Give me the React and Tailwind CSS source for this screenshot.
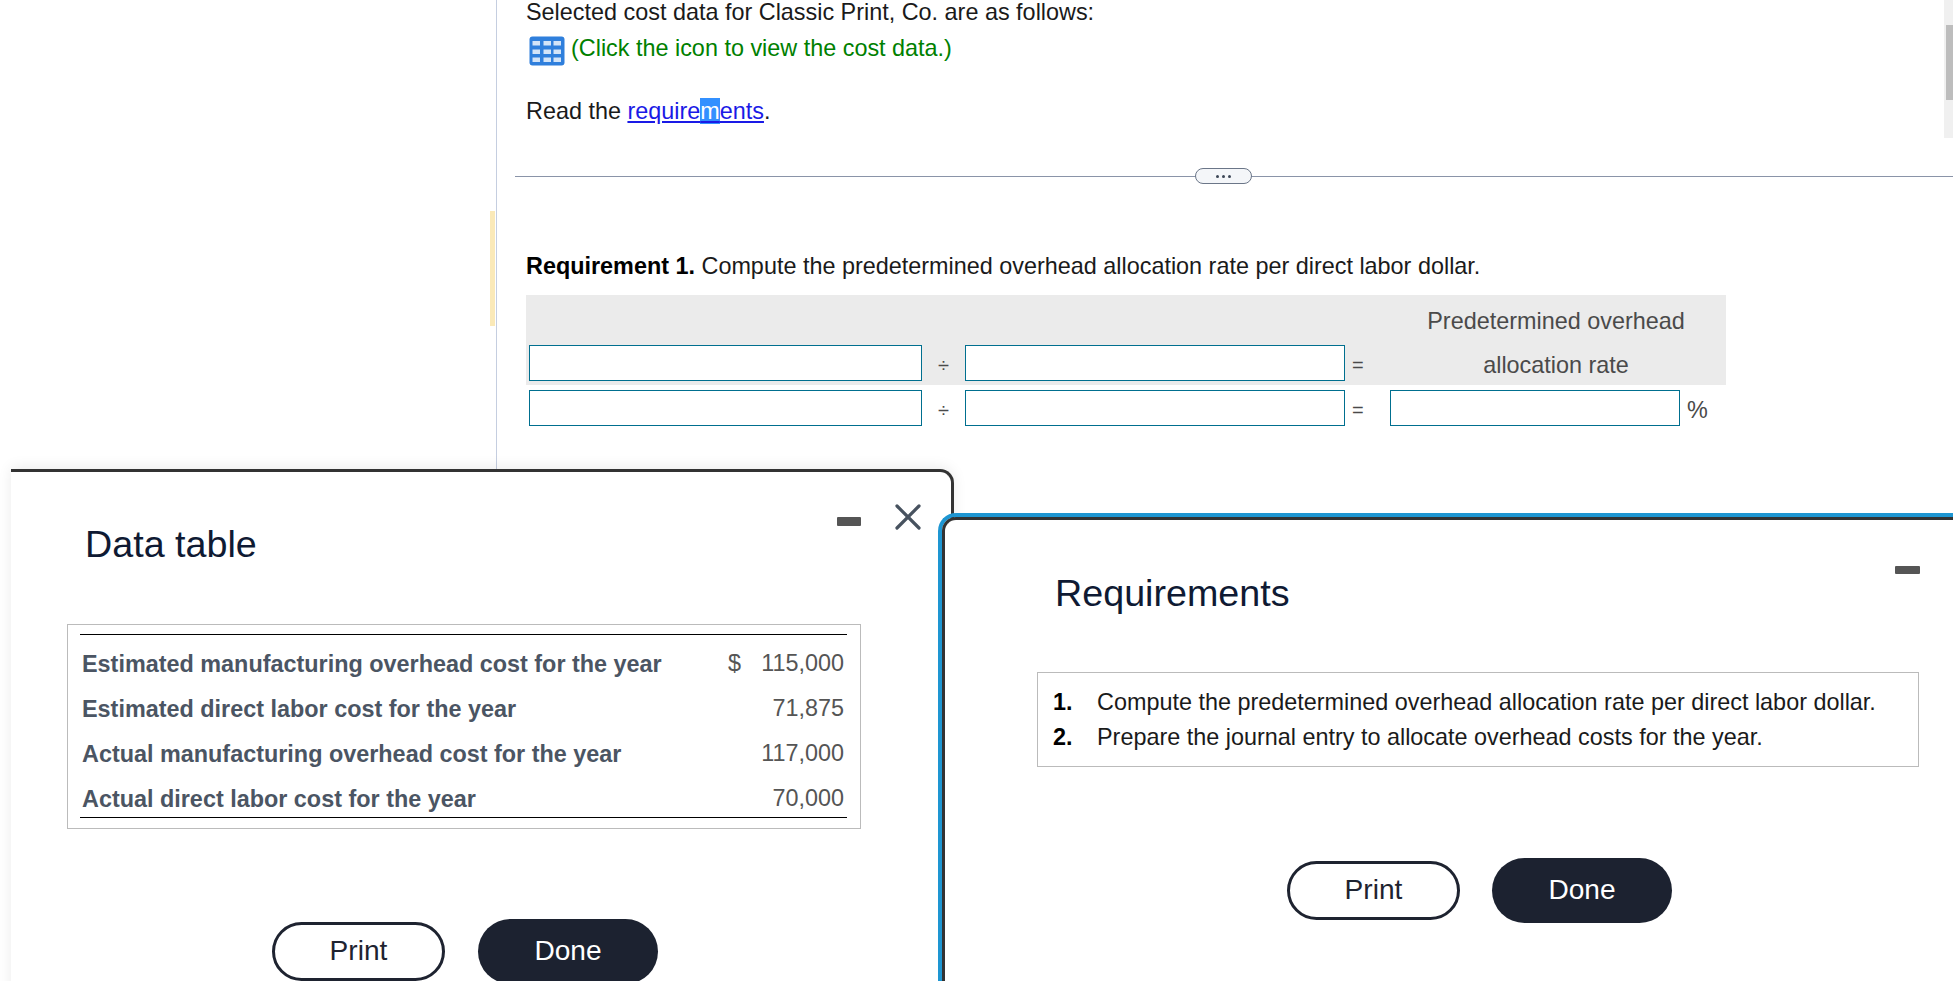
const FONT = "font-['Liberation_Sans',Arial,sans-serif]";

const dataRows = [
  ['Estimated manufacturing overhead cost for the year', '115,000', true],
  ['Estimated direct labor cost for the year', '71,875'],
  ['Actual manufacturing overhead cost for the year', '117,000'],
  ['Actual direct labor cost for the year', '70,000'],
];

function TableIcon() {
  return (
    <svg width="36" height="30" viewBox="0 0 36 30" className="shrink-0">
      <rect x="0.5" y="0.5" width="35" height="29" rx="3" fill="#2f7fdc" />
      {[5, 13.5, 21.5].map((y) =>
        [3.5, 14.5, 24.5].map((x) => <rect key={`${x}-${y}`} x={x} y={y} width="7.5" height="4.5" fill="#d3e4f8" />)
      )}
    </svg>
  );
}

function AnswerBox({ className }) {
  return <div className={`h-[36px] shrink-0 border border-[#006f8f] bg-white ${className}`} />;
}

function FormulaRow({ last }) {
  return (
    <div className="flex h-[36px] items-center pl-[3px] text-[#4a4a4a]">
      <AnswerBox className="w-[393px]" />
      <div className="w-[43px] pt-[3px] text-center text-[20px]">÷</div>
      <AnswerBox className="w-[380px]" />
      <div className="w-[41px] pl-[7px] pt-[3px] text-[20px]">=</div>
      {last}
    </div>
  );
}

function Minimize({ className }) {
  return <div className={`absolute bg-[#555] rounded-[1px] ${className}`} />;
}

function Buttons({ className, gap }) {
  return (
    <div className={`flex items-center text-[28.1px] ${gap} ${className}`}>
      <button type="button" className="h-[59px] w-[173px] rounded-[30px] border-[3px] border-[#1e2330] bg-white text-[#1e2330]">
        Print
      </button>
      <button type="button" className="h-[65px] w-[180px] rounded-[33px] bg-[#1c2230] text-white">
        Done
      </button>
    </div>
  );
}

export default function App() {
  return (
    <div className={`relative h-[981px] w-[1953px] overflow-hidden bg-white ${FONT} text-[23.4px] text-[#1a1a1a]`}>
      <div className="flex h-[470px]">
        <div className="relative w-[497px] shrink-0 border-r border-[#c5cee0]">
          <div className="absolute left-[490px] top-[211px] h-[115px] w-[5px] bg-[#fae9b8]" />
        </div>
        <div className="grow pl-[18px]">
          <div className="pl-[11px]">
            <div className="h-[24px] leading-[24px]">Selected cost data for Classic Print, Co. are as follows:</div>
            <div className="mt-[12px] flex h-[30px] items-center gap-[6px] pl-[3px] text-[#008000]">
              <TableIcon />
              <span className="mb-[4px]">(Click the icon to view the cost data.)</span>
            </div>
            <div className="mt-[30px] h-[30px] leading-[30px]">
              Read the{' '}
              <a href="#req" className="text-[#1a1ae6] underline">
                require<span className="bg-[#3390ff] text-white">m</span>ents
              </a>
              .
            </div>
          </div>
          <div className="relative mt-[50px] h-px bg-[#8a94a8]">
            <div className="absolute left-[680px] top-[-8px] flex h-[16px] w-[57px] items-center justify-center gap-[3px] rounded-[8px] border border-[#6b7688] bg-[#f4f6f9] pt-[1px]">
              <span className="h-[3px] w-[3px] rounded-full bg-[#3c4656]" />
              <span className="h-[3px] w-[3px] rounded-full bg-[#3c4656]" />
              <span className="h-[3px] w-[3px] rounded-full bg-[#3c4656]" />
            </div>
          </div>
          <div className="pl-[11px]">
            <div className="mt-[76px] h-[26px] leading-[26px]">
              <b className="text-black">Requirement 1.</b> Compute the predetermined overhead allocation rate per direct labor dollar.
            </div>
            <div className="mt-[16px] h-[90px] w-[1200px] bg-[#ebebeb]">
              <div className="flex h-[50px] justify-end">
                <div className="w-[340px] pt-[11px] text-center leading-[30px] text-[#4a4a4a]">Predetermined overhead</div>
              </div>
              <FormulaRow last={<div className="w-[340px] pt-[6px] text-center text-[#4a4a4a]">allocation rate</div>} />
            </div>
            <div className="mt-[5px]">
              <FormulaRow
                last={
                  <>
                    <AnswerBox className="ml-[4px] w-[290px]" />
                    <span className="ml-[7px] pt-[5px] text-[#4a4a4a]">%</span>
                  </>
                }
              />
            </div>
          </div>
        </div>
      </div>

      {/* data table window */}
      <div className="absolute left-[11px] top-[469px] h-[560px] w-[943px] rounded-tr-[14px] border-r-[3px] border-t-[3px] border-[#333] bg-white shadow-[0_-2px_14px_rgba(0,0,0,0.08)]">
        <Minimize className="left-[826px] top-[45px] h-[9px] w-[24px]" />
        <svg width="26" height="26" viewBox="0 0 26 26" className="absolute left-[884px] top-[32px]">
          <path d="M2 2 L24 24 M24 2 L2 24" stroke="#47525f" strokeWidth="3.2" strokeLinecap="round" />
        </svg>
        <h2 className="pl-[74px] pt-[49px] text-[37.7px] leading-[46px] text-[#0f1a33]">Data table</h2>
        <div className="ml-[56px] mt-[57px] h-[205px] w-[794px] border border-[#bbb] pl-[12px] pr-[13px] pt-[9px]">
          <div className="h-[184px] border-y border-black pt-[7px]">
            {dataRows.map(([label, value, dollar]) => (
              <div key={label} className="flex h-[45px] items-center pl-[2px] pr-[3px]">
                <span className="grow font-bold text-[#4b5563]">{label}</span>
                {dollar && <span className="mb-[1px] text-[#555]">$</span>}
                <span className="mb-[1px] w-[103px] text-right text-[#555]">{value}</span>
              </div>
            ))}
          </div>
        </div>
        <Buttons className="ml-[261px] mt-[90px]" gap="gap-[33px]" />
      </div>

      {/* requirements window */}
      <div className="absolute left-[938px] top-[513px] h-[560px] w-[1100px] rounded-tl-[18px] border-l-[4px] border-t-[4px] border-[#1e96d2]">
        <div className="relative h-full rounded-tl-[14px] border-l-[3px] border-t-[3px] border-[#333] bg-white">
          <Minimize className="left-[950px] top-[46px] h-[8px] w-[25px]" />
          <h2 className="pl-[110px] pt-[50px] text-[37.7px] leading-[46px] text-[#0f1a33]">Requirements</h2>
          <div className="ml-[92px] mt-[56px] h-[95px] w-[882px] border border-[#bbb] pl-[15px] pt-[12px]">
            {[
              'Compute the predetermined overhead allocation rate per direct labor dollar.',
              'Prepare the journal entry to allocate overhead costs for the year.',
            ].map((text, i) => (
              <div key={text} className="flex h-[35px] items-center">
                <b className="w-[44px] text-black">{i + 1}.</b>
                <span>{text}</span>
              </div>
            ))}
          </div>
          <Buttons className="ml-[342px] mt-[91px]" gap="gap-[32px]" />
        </div>
      </div>

      <div className="absolute right-0 top-0 h-[138px] w-[9px] bg-[#f0f0f0] pl-[2px] pt-[25px]">
        <div className="h-[75px] w-[7px] bg-[#bdbdbd]" />
      </div>
    </div>
  );
}
